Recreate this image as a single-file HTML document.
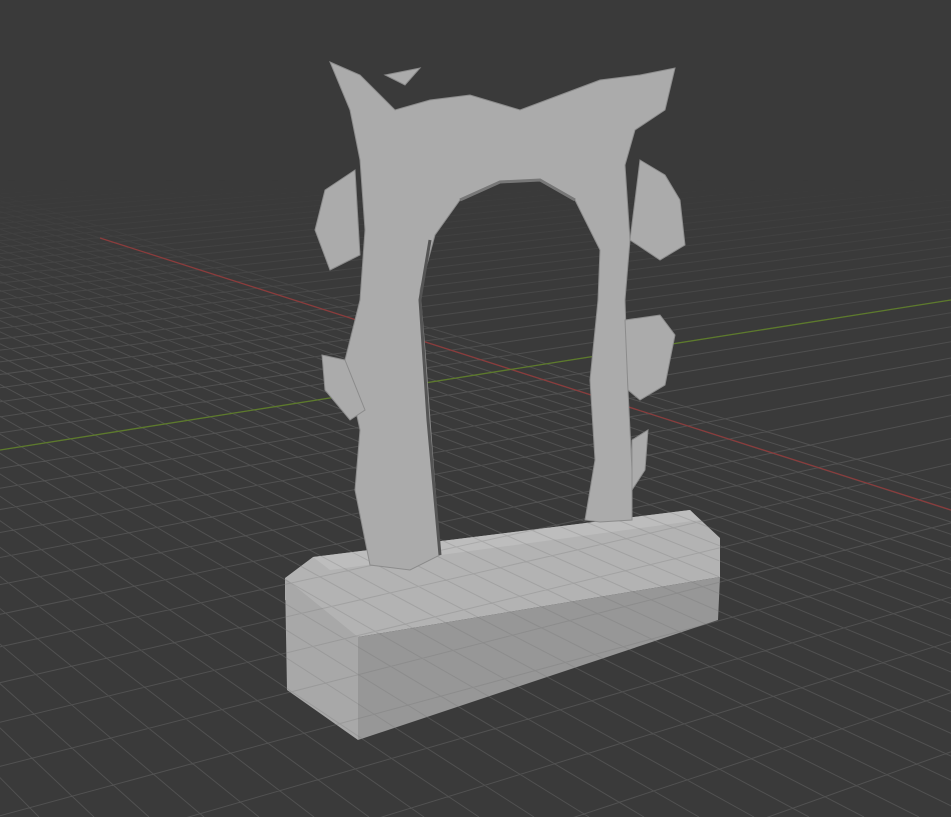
<!DOCTYPE html>
<html><head><style>html,body{margin:0;padding:0;background:#3a3a3a;overflow:hidden;width:951px;height:817px}svg{display:block}</style></head>
<body>
<svg id="s" width="951" height="817" viewBox="0 0 951 817" xmlns="http://www.w3.org/2000/svg">
<defs>
<linearGradient id="fd" x1="0" y1="0" x2="0" y2="1">
<stop offset="0" stop-color="#fff" stop-opacity="0"/>
<stop offset="0.22" stop-color="#fff" stop-opacity="0"/>
<stop offset="0.45" stop-color="#fff" stop-opacity="1"/>
<stop offset="1" stop-color="#fff" stop-opacity="1"/>
</linearGradient>
<mask id="m"><rect width="951" height="817" fill="url(#fd)"/></mask>
</defs>
<rect width="951" height="817" fill="#3a3a3a"/>
<g id="grid" stroke="#515151" stroke-width="1" fill="none" mask="url(#m)"></g>
<line x1="100" y1="238" x2="951" y2="510" stroke="#8a3c3c" stroke-width="1.3"/>
<line x1="0" y1="450" x2="951" y2="300" stroke="#5d7a2c" stroke-width="1.3"/>
<polygon points="285,578 313,557 690,510 720,538 720,577 358,637 285,600" fill="#b3b3b3"/>
<polygon points="285,578 358,637 358,740 287,690" fill="#a8a8a8"/>
<polygon points="358,637 720,577 718,620 358,740" fill="#979797"/>
<polygon points="313,557 690,510 700,520 330,570" fill="#bdbdbd"/>
<g id="grid2" stroke="#6a6a6a" stroke-width="1" fill="none" opacity="0.22"></g>
<g fill="#ababab" stroke="#8c8c8c" stroke-width="1">
<path d="M330,62 L360,75 L395,110 L430,100 L470,95 L520,110 L560,95 L600,80 L640,75 L675,68 L665,110 L635,130 L625,165 L630,240 L625,300 L628,390 L632,470 L632,520 L600,522 L585,520 L595,460 L590,380 L598,300 L600,250 L575,200 L540,180 L500,182 L460,200 L435,235 L420,290 L425,350 L430,420 L440,555 L410,570 L370,565 L355,490 L360,430 L345,360 L360,300 L365,230 L360,160 L350,110 Z"/>
<path d="M355,170 L325,190 L315,230 L330,270 L360,255 Z"/>
<path d="M640,160 L665,175 L680,200 L685,245 L660,260 L630,240 Z"/>
<path d="M345,360 L322,355 L325,390 L350,420 L365,410 Z"/>
<path d="M625,320 L660,315 L675,335 L665,385 L640,400 L628,390 Z"/>
<path d="M632,440 L648,430 L645,470 L632,490 Z"/>
<path d="M385,75 L420,68 L405,85 Z"/>
</g>
<path d="M430,240 L420,300 L428,420 L440,555" stroke="#555" stroke-width="3" fill="none"/>
<path d="M460,200 L500,182 L540,180 L575,200" stroke="#777" stroke-width="3" fill="none"/>
</svg>
<script>
(function(){
var ns="http://www.w3.org/2000/svg";
var g=document.getElementById('grid');
var d="";
var h=-60,VA=[3228,h],VB=[-831,h],k=8e-5,c=1/(375-h);
for(var n=-40;n<=40;n++){
 var y=h+1/(c-n*k); if(!(y>0)||y>3000) continue;
 var x=475;
 var s=(y-VA[1])/(x-VA[0]);
 var x0=-100,y0=y+s*(x0-x);
 d+="M"+x0+","+y0.toFixed(1)+" L"+VA[0]+","+VA[1]+" ";
}
for(var m=-70;m<=2;m++){
 var xb=1909+55*m;
 d+="M"+VB[0]+","+VB[1]+" L"+xb+",817 ";
}
var p=document.createElementNS(ns,'path');p.setAttribute('d',d);g.appendChild(p);
var g2=document.getElementById('grid2');
var p2=document.createElementNS(ns,'path');p2.setAttribute('d',d);
var cp=document.createElementNS(ns,'clipPath');cp.setAttribute('id','bc');
var poly=document.createElementNS(ns,'polygon');poly.setAttribute('points','285,578 313,557 690,510 720,538 718,620 358,740 287,690');
cp.appendChild(poly);document.getElementById('s').appendChild(cp);
g2.setAttribute('clip-path','url(#bc)');g2.appendChild(p2);
})();
</script>
</body></html>
